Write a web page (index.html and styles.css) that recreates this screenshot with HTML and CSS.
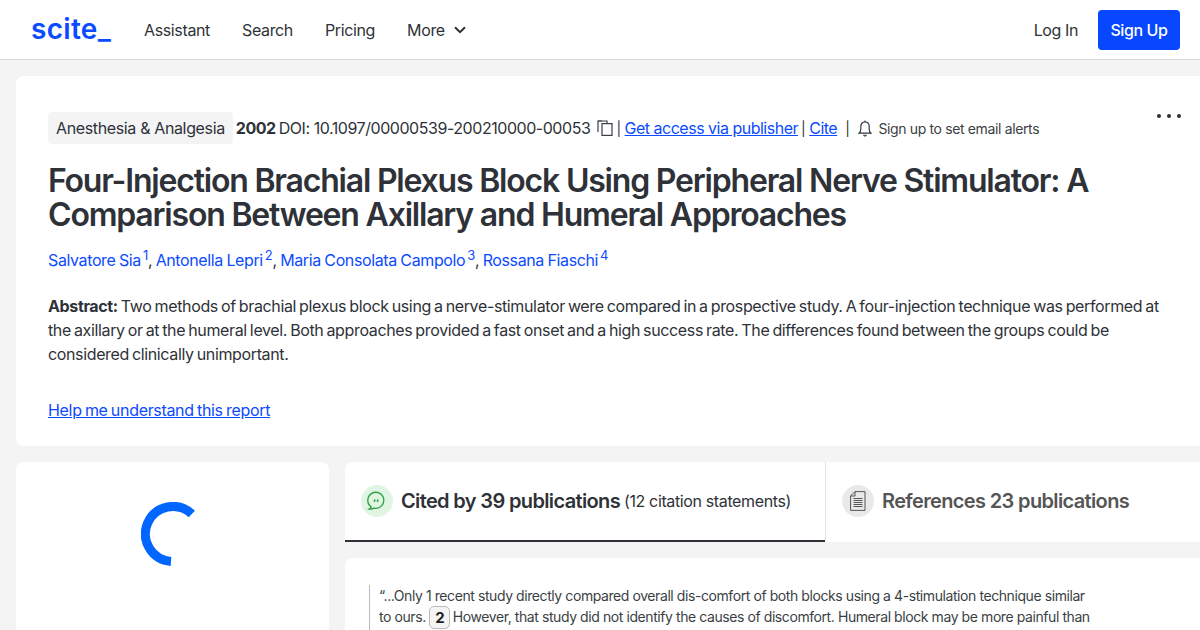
FILE: index.html
```html
<!DOCTYPE html>
<html lang="en">
<head>
    <meta charset="UTF-8">
    <meta name="viewport" content="width=device-width, initial-scale=1.0">
    <title>Four-Injection Brachial Plexus Block - scite</title>
    <link rel="stylesheet" href="styles.css">
</head>
<body>
    <header class="navbar">
        <a class="brand">scite_</a>
        <nav class="nav-links">
            <a>Assistant</a>
            <a>Search</a>
            <a>Pricing</a>
            <a class="nav-more">More
                <svg width="12" height="8" viewBox="0 0 12 8" fill="none" stroke="#2e3238" stroke-width="2"><path d="M1 1.2l5 5 5-5"/></svg>
            </a>
        </nav>
        <div class="nav-actions">
            <a class="login">Log In</a>
            <a class="signup">Sign Up</a>
        </div>
    </header>

    <main class="page">
        <section class="paper-card">
            <div class="meta-row">
                <span class="journal">Anesthesia &amp; Analgesia</span>
                <strong class="year">2002</strong>
                <span class="doi">DOI: 10.1097/00000539-200210000-00053</span>
                <svg class="copy-icon" width="16" height="16" viewBox="0 0 16 16" fill="none" stroke="#3a3f45" stroke-width="1.2"><path d="M5 1H1v11"/><path d="M1 1h9v2"/><rect x="5" y="3.6" width="10" height="11.8"/></svg>
                <span class="sep first">|</span>
                <a class="link">Get access via publisher</a>
                <span class="sep">|</span>
                <a class="link">Cite</a>
                <span class="sep wide">|</span>
                <svg class="bell-icon" width="14" height="17" viewBox="0 0 14 17" fill="none" stroke="#33373d" stroke-width="1.2"><path d="M1 13.2h12c-1.3-1.2-1.8-2.4-1.8-4V6.4C11.2 3.8 9.5 2 7 2S2.8 3.8 2.8 6.4v2.8c0 1.6-.5 2.8-1.800 4z"/><path d="M7 2V.6"/><path d="M5.600 14.800c.3.800.8 1.200 1.400 1.200s1.100-.4 1.400-1.200"/></svg>
                <span class="alerts">Sign up to set email alerts</span>
            </div>
            <div class="more-dots"><i></i><i></i><i></i></div>
            <h1 class="title">Four-Injection Brachial Plexus Block Using Peripheral Nerve Stimulator: A Comparison Between Axillary and Humeral Approaches</h1>
            <p class="authors">
                <a>Salvatore Sia<sup>1</sup></a>, <a>Antonella Lepri<sup>2</sup></a>, <a>Maria Consolata Campolo<sup>3</sup></a>, <a>Rossana Fiaschi<sup>4</sup></a>
            </p>
            <p class="abstract"><strong>Abstract:</strong> Two methods of brachial plexus block using a nerve-stimulator were compared in a prospective study. A four-injection technique was performed at the axillary or at the humeral level. Both approaches provided a fast onset and a high success rate. The differences found between the groups could be considered clinically unimportant.</p>
            <a class="link help">Help me understand this report</a>
        </section>

        <div class="lower">
            <aside class="side-card">
                <svg class="spinner" width="64" height="64" viewBox="0 0 64 64" fill="none" stroke="#0066ff" stroke-width="9"><path d="M50.800 12A27.500 27.500 0 1 0 30 59.400"/></svg>
            </aside>
            <section class="results">
                <div class="tabs">
                    <div class="tab active">
                        <span class="tab-icon green">
                            <svg width="20" height="20" viewBox="0 0 20 20" fill="none" stroke="#2f9e44" stroke-width="1.300"><path d="M2.200 18c1-.6 1.600-1.300 1.900-2.200A8 8 0 1 1 7.400 17.200c-1.700.7-3.300.9-5.200.8z"/><path d="M7.800 8.500l-.5 2.300M10.900 8.500l-.5 2.300" stroke-width="1.600"/></svg>
                        </span>
                        <span class="tab-title">Cited by 39 publications</span>
                        <span class="tab-note">(12 citation statements)</span>
                    </div>
                    <div class="tab">
                        <span class="tab-icon grey">
                            <svg width="16" height="20" viewBox="0 0 16 20" fill="none" stroke="#555" stroke-width="1"><path d="M5 .6h10v18.800H.6V5z"/><path d="M5 .6V5H.6"/><path d="M3.500 7.500h9M3.500 9.500h9M3.500 11.500h9M3.500 13.500h9M3.500 15.500h9"/></svg>
                        </span>
                        <span class="tab-title muted">References 23 publications</span>
                    </div>
                </div>
                <article class="statement">
                    <blockquote>“...Only 1 recent study directly compared overall dis-comfort of both blocks using a 4-stimulation technique similar to ours. <span class="ref-badge">2</span> However, that study did not identify the causes of discomfort. Humeral block may be more painful than</blockquote>
                </article>
            </section>
        </div>
    </main>
</body>
</html>
```

FILE: styles.css
```css
* {
    margin: 0;
    padding: 0;
    box-sizing: border-box;
}

html, body {
    height: 630px;
    overflow: hidden;
}

body {
    font-family: Inter, 'Noto Sans', sans-serif;
    background: #f4f4f4;
    color: #2e3238;
    font-size: 16px;
}

a {
    color: inherit;
    text-decoration: none;
}

.navbar {
    height: 60px;
    background: #fff;
    border-bottom: 1px solid #d9d9d9;
    display: flex;
    align-items: center;
    padding: 0 20px 0 31px;
}

.brand {
    font-size: 28px;
    font-weight: 600;
    color: #0b4bff;
    width: 113px;
    letter-spacing: 0.3px;
    margin-top: -2px;
}

.nav-links {
    display: flex;
    gap: 32px;
    letter-spacing: -0.36px;
}

.nav-more {
    display: flex;
    align-items: center;
    gap: 9px;
}

.nav-actions {
    margin-left: auto;
    display: flex;
    align-items: center;
    gap: 20px;
    letter-spacing: -0.4px;
}

.signup {
    background: #0747ff;
    color: #fff;
    font-weight: 500;
    height: 40px;
    width: 82px;
    border-radius: 4px;
    display: flex;
    align-items: center;
    justify-content: center;
}

.page {
    padding: 16px 0 0 16px;
}

.paper-card {
    position: relative;
    background: #fff;
    border-radius: 8px 0 0 8px;
    height: 370px;
    padding: 36px 32px 0;
}

.meta-row {
    display: flex;
    align-items: center;
    height: 32px;
    font-size: 16px;
    letter-spacing: -0.45px;
}

.journal {
    background: #f4f4f4;
    border-radius: 4px;
    height: 32px;
    line-height: 32px;
    padding: 0 8px;
    margin-right: 3px;
    letter-spacing: -0.36px;
}

.year {
    font-weight: 700;
    margin-right: 3px;
}

.copy-icon {
    margin: 0 3px 0 7px;
}

.link {
    color: #0b4bff;
    text-decoration: underline;
}

.meta-row .link {
    letter-spacing: -0.5px;
}

.sep {
    font-size: 14px;
    margin: 0 4px 0 3px;
}

.sep.first {
    margin: 0 4px 0 0;
}

.sep.wide {
    margin: 0 5px 0 8px;
}

.bell-icon {
    margin: 0 6px 0 4px;
}

.alerts {
    font-size: 14px;
    letter-spacing: -0.36px;
    color: #3a3f45;
}

.more-dots {
    position: absolute;
    top: 38px;
    right: 19px;
    display: flex;
    gap: 6px;
}

.more-dots i {
    width: 4px;
    height: 4px;
    border-radius: 50%;
    background: #2e3238;
}

.title {
    font-size: 32px;
    line-height: 34px;
    font-weight: 600;
    letter-spacing: -1.2px;
    margin-top: 20px;
    max-width: 1080px;
}

.authors {
    margin-top: 16px;
    line-height: 24px;
    color: #2e3238;
    letter-spacing: -0.38px;
    word-spacing: -0.6px;
}

.authors a {
    color: #0b4bff;
}

.authors sup {
    font-size: 13px;
    line-height: 0;
    margin-left: 2px;
}

.abstract {
    margin-top: 22px;
    line-height: 24px;
    letter-spacing: -0.36px;
    word-spacing: -1.1px;
    max-width: 1136px;
}

.help {
    display: block;
    width: max-content;
    margin-top: 32px;
    line-height: 24px;
    letter-spacing: -0.32px;
    word-spacing: -0.9px;
}

.lower {
    display: flex;
    gap: 16px;
    margin-top: 16px;
}

.side-card {
    width: 313px;
    height: 168px;
    background: #fff;
    border-radius: 8px 8px 0 0;
    padding: 40px 0 0 125px;
}

.results {
    flex: 1;
}

.tabs {
    display: flex;
    height: 80px;
    background: #fff;
    border-radius: 8px 0 0 0;
}

.tab {
    display: flex;
    align-items: center;
    padding: 0 16px;
    flex: 1;
    border-bottom: 2px solid transparent;
}

.tab.active {
    flex: none;
    width: 480px;
    border-bottom-color: #2e3238;
}

.tab:not(.active) {
    border-left: 1px solid #e2e2e2;
}

.tab-icon {
    width: 32px;
    height: 32px;
    border-radius: 50%;
    display: flex;
    align-items: center;
    justify-content: center;
    margin-right: 8px;
}

.tab-icon.green {
    background: #e0f5e2;
}

.tab-icon.grey {
    background: #e9e9e9;
}

.tab-title {
    font-size: 20px;
    font-weight: 600;
    letter-spacing: -0.64px;
}

.tab-title.muted {
    color: #555;
}

.tab-note {
    margin-left: 4px;
    letter-spacing: -0.37px;
}

.statement {
    background: #fff;
    border-radius: 8px 0 0 0;
    margin-top: 16px;
    height: 72px;
    padding: 27px 102px 0 24px;
}

.statement blockquote {
    border-left: 1px solid #bbb;
    padding-left: 9px;
    font-size: 14px;
    line-height: 21px;
    letter-spacing: -0.42px;
    color: #3a3f45;
    height: 45px;
}

.ref-badge {
    display: inline-block;
    width: 21px;
    height: 23px;
    line-height: 21px;
    border: 1px solid #bbb;
    border-radius: 5px;
    background: #f4f4f4;
    text-align: center;
    font-size: 15px;
    font-weight: 700;
    color: #1c1f23;
    margin: -2px -1px -2px 0;
    vertical-align: -1px;
}
```
